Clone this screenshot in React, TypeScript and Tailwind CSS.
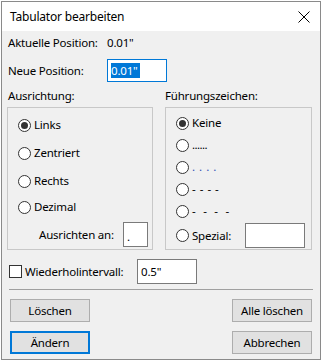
import React from "react";

const font = { fontFamily: '"Noto Sans", "Segoe UI", sans-serif' };

function Radio({ checked, label, labelClass = "" }: { checked?: boolean; label: React.ReactNode; labelClass?: string }) {
  return (
    <div className="flex items-center">
      <span className="w-[13px] h-[13px] rounded-full border border-[#333] bg-white flex items-center justify-center shrink-0">
        {checked && <span className="w-[7px] h-[7px] rounded-full bg-[#333]" />}
      </span>
      <span className={"ml-[3px] " + labelClass}>{label}</span>
    </div>
  );
}

function Button({ label, primary }: { label: string; primary?: boolean }) {
  return (
    <button
      className={
        "w-[80px] h-[23px] bg-[#e1e1e1] text-black flex items-center justify-center " +
        (primary ? "border-2 border-[#0078d7]" : "border border-[#adadad]")
      }
    >
      {label}
    </button>
  );
}

export default function App() {
  return (
    <div className="w-[323px] h-[361px] bg-white pt-px pl-px" style={font}>
      <div className="w-[320px] h-[359px] border border-[#8a8a8a] flex flex-col text-[11.5px] tracking-[-0.2px] text-black leading-[16px]">
        {/* title bar */}
        <div className="h-[29px] bg-white flex items-center pl-[8px] pr-[10px]">
          <span className="text-[12px]">Tabulator bearbeiten</span>
          <svg className="ml-auto" width="12" height="12" viewBox="0 0 12 12">
            <path d="M0.5 0.5 L11.5 11.5 M11.5 0.5 L0.5 11.5" stroke="#000" strokeWidth="1" />
          </svg>
        </div>

        <div className="flex-1 bg-[#f0f0f0] px-[5px] flex flex-col">
          <div className="flex items-center mt-[4px] pl-px">
            <span className="w-[99px]">Aktuelle Position:</span>
            <span>0.01"</span>
          </div>

          <div className="flex items-center mt-[8px] pl-px">
            <span className="w-[99px]">Neue Position:</span>
            <div className="w-[60px] h-[23px] bg-white border border-[#0078d7] flex items-center pl-[3px]">
              <span className="bg-[#0078d7] text-white leading-[15px] pr-[2px]">0.01"</span>
            </div>
          </div>

          <div className="grid grid-cols-[146px_147px] gap-x-[12px] mt-[6px]">
            <div className="pl-px">Ausrichtung:</div>
            <div>Führungszeichen:</div>

            <div className="mt-[3px] h-[143px] border border-[#c8c8c8] flex flex-col pl-[10px] pt-[3px]">
              <div className="h-[28px] flex items-center"><Radio checked label="Links" /></div>
              <div className="h-[28px] flex items-center"><Radio label="Zentriert" /></div>
              <div className="h-[28px] flex items-center"><Radio label="Rechts" /></div>
              <div className="h-[24px] flex items-center"><Radio label="Dezimal" /></div>
              <div className="flex items-center mt-[3px] pr-[4px]">
                <span className="ml-[21px]">Ausrichten an:</span>
                <div className="ml-auto w-[25px] h-[25px] bg-white border border-[#7a7a7a] flex items-end pl-[3px] pb-[2px]">
                  <span className="leading-[14px]">.</span>
                </div>
              </div>
            </div>

            <div className="mt-[3px] h-[143px] border border-[#c8c8c8] flex flex-col pl-[10px] pt-[4px]">
              <div className="h-[22px] flex items-center"><Radio checked label="Keine" /></div>
              <div className="h-[22px] flex items-center"><Radio label="......" labelClass="tracking-[-0.6px]" /></div>
              <div className="h-[22px] flex items-center"><Radio label=". . . ." labelClass="text-[#2b4fb5] tracking-[0.5px]" /></div>
              <div className="h-[22px] flex items-center"><Radio label="- - - -" labelClass="tracking-[0.5px]" /></div>
              <div className="h-[22px] flex items-center"><Radio label="-  -  -  -" labelClass="whitespace-pre tracking-[0.5px]" /></div>
              <div className="flex items-center mt-px pr-[6px]">
                <Radio label="Spezial:" />
                <div className="ml-auto w-[60px] h-[25px] bg-white border border-[#7a7a7a]" />
              </div>
            </div>
          </div>

          <div className="flex items-center mt-[9px] pl-[2px]">
            <span className="w-[13px] h-[13px] border border-[#333] bg-white" />
            <span className="ml-[3px] w-[112px]">Wiederholintervall:</span>
            <div className="w-[60px] h-[25px] bg-white border border-[#7a7a7a] flex items-center pl-[3px]">0.5"</div>
          </div>

          <div className="mt-[5px] mx-[2px] border-t border-[#a0a0a0]" />

          <div className="flex justify-between mt-[9px] px-[3px]">
            <Button label="Löschen" />
            <Button label="Alle löschen" />
          </div>
          <div className="flex justify-between mt-[9px] px-[3px]">
            <Button label="Ändern" primary />
            <Button label="Abbrechen" />
          </div>
        </div>
      </div>
    </div>
  );
}
